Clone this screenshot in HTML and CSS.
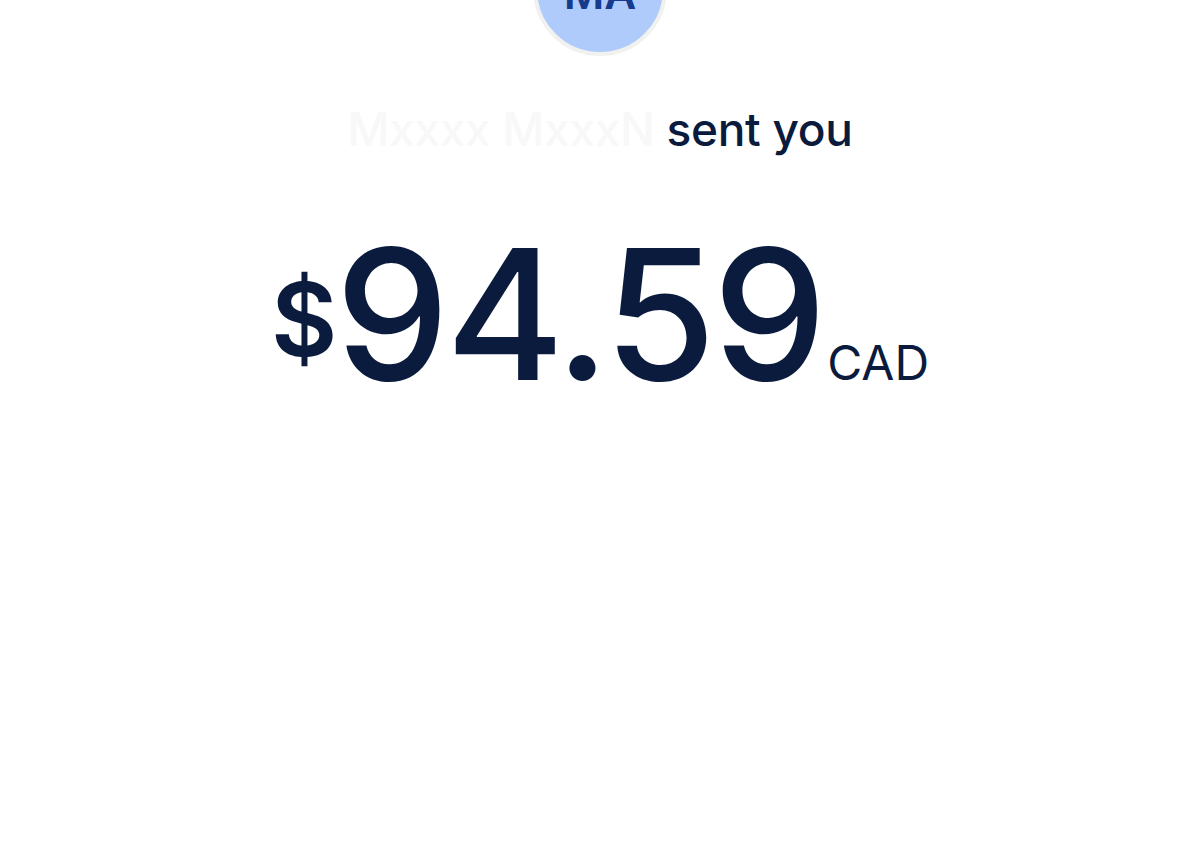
FILE: index.html
```html
<!DOCTYPE html>
<html lang="en">
<head>
    <meta charset="UTF-8">
    <meta name="viewport" content="width=device-width, initial-scale=1.0">
    <title>Payment received</title>
    <link rel="stylesheet" href="styles.css">
</head>
<body>
    <div class="receipt">
        <div class="avatar">MA</div>

        <p class="sender"><span class="sender-name">Mxxxx MxxxN</span> sent you</p>

        <div class="amount">
            <span class="currency-sign">$</span>
            <span class="value">94.59</span>
            <span class="currency-code">CAD</span>
        </div>
    </div>
</body>
</html>
```

FILE: styles.css
```css
* {
    margin: 0;
    padding: 0;
    box-sizing: border-box;
}

body {
    font-family: 'Inter', 'Liberation Sans', sans-serif;
    background: #ffffff;
    color: #0b1b3d;
    min-height: 100vh;
}

.receipt {
    display: flex;
    flex-direction: column;
    align-items: center;
}

.avatar {
    width: 134px;
    height: 134px;
    margin-top: -78px;
    border-radius: 50%;
    border: 4px solid #f1f1ef;
    background: #aecbfc;
    color: #163a8c;
    font-size: 44px;
    font-weight: 600;
    display: flex;
    align-items: center;
    justify-content: center;
    padding-top: 8px;
}

.sender {
    margin-top: 46px;
    font-size: 46px;
    font-weight: 500;
    line-height: 1.2;
    letter-spacing: -0.3px;
}

/* name is blanked out in the source shot */
.sender-name {
    color: #f8f8f8;
}

.amount {
    margin-top: 67px;
    display: flex;
    align-items: baseline;
    line-height: 1;
}

.currency-sign {
    font-size: 102px;
    font-weight: 600;
    position: relative;
    top: -24px;
    margin-right: -2px;
}

.value {
    font-size: 181px;
    font-weight: 500;
    letter-spacing: -3.5px;
}

.currency-code {
    font-size: 48px;
    font-weight: 400;
    margin-left: 4px;
}
```
